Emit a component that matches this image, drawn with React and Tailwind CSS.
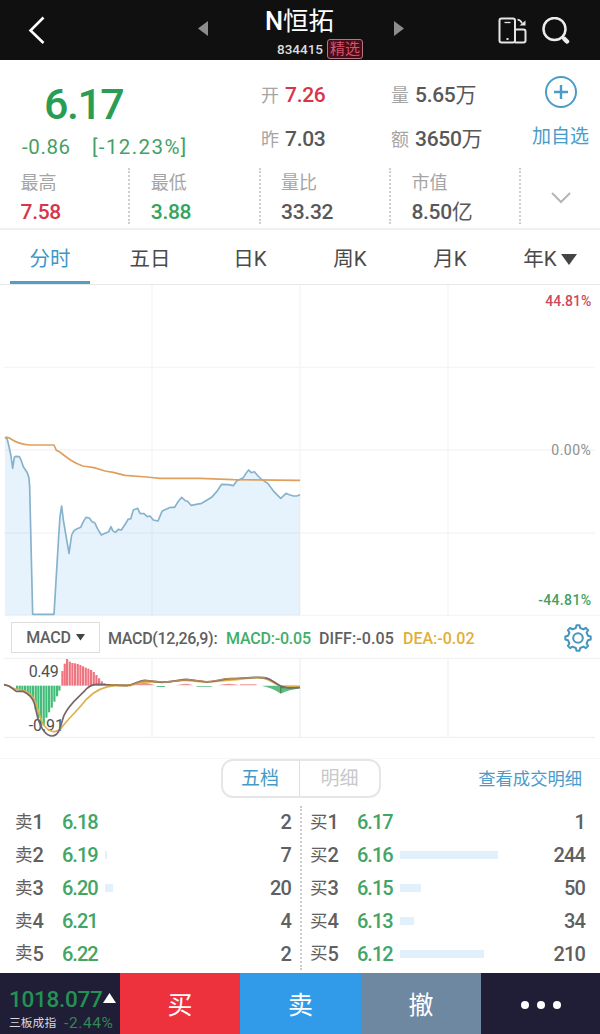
import React, { useState } from 'react';
import clsx from 'clsx';

const stats = [
  { label: '最高', value: '7.58', color: 'text-[#d8344c]' },
  { label: '最低', value: '3.88', color: 'text-[#35a45b]' },
  { label: '量比', value: '33.32', color: 'text-[#585858]' },
  { label: '市值', value: '8.50', unit: '亿', color: 'text-[#585858]' },
];

const periods = ['分时', '五日', '日K', '周K', '月K', '年K'];

const sells = [
  { side: '卖', level: 1, price: '6.18', volume: 2, bar: 0 },
  { side: '卖', level: 2, price: '6.19', volume: 7, bar: 2 },
  { side: '卖', level: 3, price: '6.20', volume: 20, bar: 8 },
  { side: '卖', level: 4, price: '6.21', volume: 4, bar: 0 },
  { side: '卖', level: 5, price: '6.22', volume: 2, bar: 0 },
];

const buys = [
  { side: '买', level: 1, price: '6.17', volume: 1, bar: 0 },
  { side: '买', level: 2, price: '6.16', volume: 244, bar: 98 },
  { side: '买', level: 3, price: '6.15', volume: 50, bar: 21 },
  { side: '买', level: 4, price: '6.13', volume: 34, bar: 14 },
  { side: '买', level: 5, price: '6.12', volume: 210, bar: 84 },
];

const pricePoints =
  '15,55 20,52 26,75 33,108 38,145 43,112 48,109 58,110 64,122 70,140 82,158 87,175 89,200 98,583 162,583 176,350 180,290 185,258 190,300 207,400 215,345 221,333 228,328 242,322 250,305 258,292 268,294 276,305 284,308 292,325 304,345 312,341 326,335 333,320 338,332 346,337 355,328 364,330 376,312 385,297 392,297 400,270 413,265 420,280 432,281 442,290 450,288 460,300 474,303 486,274 498,268 512,262 524,262 534,245 545,232 557,243 562,243 573,256 605,250 620,241 635,232 650,215 665,193 685,194 700,197 710,183 730,173 738,160 746,150 754,158 763,155 774,168 785,178 803,190 822,215 842,235 848,230 858,220 868,224 880,228 890,228 900,224';

// MACD 柱: [x, 高度]
const greenBars = [
  [48, 10], [56, 14], [64, 15], [72, 18], [80, 24], [88, 30], [96, 42], [104, 72],
  [112, 98], [120, 122], [128, 120], [136, 96], [144, 80], [152, 66], [160, 48], [168, 32], [175, 15],
];
const redBars = [
  [184, 44], [191, 66], [198, 80], [206, 72], [214, 68], [222, 67], [230, 65], [238, 62], [246, 58],
  [254, 54], [262, 51], [270, 47], [278, 41], [286, 32], [294, 22], [302, 13], [310, 7],
];

const Header = () => (
  <header className="h-[60px] bg-[#101010] flex items-center text-white">
    <div className="w-[190px] pl-7">
      <svg width="18" height="28" viewBox="0 0 18 28" fill="none" stroke="#fff" strokeWidth="2.6">
        <path d="M15.5 1.5 2.5 14.5 15.5 27" />
      </svg>
    </div>
    <div className="w-[222px] flex items-center justify-between px-2">
      <svg width="10" height="15" viewBox="0 0 10 15" className="mt-[-3px]">
        <path d="M10 0v15L0 7.5z" fill="#8d8d8d" />
      </svg>
      <div className="w-[110px] pt-[5px]">
        <h1 className="pl-[19px] text-[25.500px] leading-[29px] whitespace-nowrap">
          <span className="font-medium">N</span>恒拓
        </h1>
        <div className="flex items-center gap-[4px] pl-[31px] mt-[3px]">
          <span className="text-[13.5px] leading-5 font-medium text-[#dedede]">834415</span>
          <span className="w-[36px] h-5 shrink-0 rounded-[3px] border border-[#b17680] bg-[#4a0c18] text-[#d65368] text-[15px] leading-[18px] text-center whitespace-nowrap">
            精选
          </span>
        </div>
      </div>
      <svg width="10" height="15" viewBox="0 0 10 15" className="mt-[-3px]">
        <path d="M0 0v15l10-7.500z" fill="#8d8d8d" />
      </svg>
    </div>
    <div className="flex-1 flex items-center justify-end pr-[30px] pt-[1px] gap-[14px]">
      <svg width="30" height="28" viewBox="0 0 30 28" fill="none" stroke="#e6e6e6" strokeWidth="2">
        <rect x="1.500" y="1.500" width="15.500" height="24" rx="2" />
        <path d="M6.500 5.500h6" strokeWidth="1.300" />
        <path d="M8.500 22h2" />
        <path d="M17 12.500h8.500a2 2 0 0 1 2 2v9a2 2 0 0 1-2 2H17" />
        <path d="M19.500 2.500c2.500.5 4 2 4.500 4" strokeWidth="1.500" />
        <path d="M27.500 3.500V8.500H21.500z" fill="#e6e6e6" stroke="none" />
      </svg>
      <svg width="28" height="28" viewBox="0 0 28 28" fill="none" stroke="#ededed">
        <circle cx="12.500" cy="12" r="11" strokeWidth="2.500" />
        <path d="m20.500 20 1.500 1.500" strokeWidth="2.500" />
        <path d="m22.500 22 2.500 2.500" strokeWidth="4.500" strokeLinecap="round" />
      </svg>
    </div>
  </header>
);

const Pair = ({ label, value, unit, color = 'text-[#585858]' }) => (
  <div className="flex items-center h-[43.500px] whitespace-nowrap">
    <span className="w-6 text-[18px] text-[#a5a5a5]">{label}</span>
    <span className={clsx('text-[21px] tracking-[-0.3px]', color)}>
      <span className="font-medium">{value}</span>
      {unit}
    </span>
  </div>
);

const Quote = () => (
  <section className="h-[170px] border-b-2 border-[#f0f0f0]">
    <div className="h-[105px] flex">
      <div className="w-[261px] pl-[22px] pt-[20px] text-[#2a9d54]">
        <div className="pl-[22px] text-[43px] leading-[49px] font-medium tracking-[-1.5px]">6.17</div>
        <div className="flex pt-[1px] text-[20.500px] leading-[34px] tracking-[0.6px] text-[#459f68]">
          <span className="w-[70px]">-0.86</span>
          <span className="tracking-[1.4px]">[-12.23%]</span>
        </div>
      </div>
      <div className="w-[130px] pt-[14px]">
        <Pair label="开" value="7.26" color="text-[#d8344c]" />
        <Pair label="昨" value="7.03" />
      </div>
      <div className="w-[130px] pt-[14px]">
        <Pair label="量" value="5.65" unit="万" />
        <Pair label="额" value="3650" unit="万" />
      </div>
      <div className="flex-1 flex flex-col items-center pt-[15px] text-[#4a9cc8]">
        <svg width="34" height="34" viewBox="0 0 34 34" fill="none" stroke="currentColor">
          <circle cx="17" cy="17" r="15" strokeWidth="2" />
          <path d="M17 10v14M10 17h14" strokeWidth="2.400" />
        </svg>
        <span className="mt-[15px] text-[19px] leading-[26px]">加自选</span>
      </div>
    </div>
    <div className="flex">
      {stats.map((item) => (
        <div key={item.label} className="w-[130.300px] h-[60px] flex">
          <div className="flex-1 pl-[20.500px] whitespace-nowrap">
            <div className="mt-[5px] text-[18px] leading-[26px] text-[#a5a5a5]">{item.label}</div>
            <div className={clsx('text-[21px] leading-[33px] tracking-[-0.3px]', item.color)}>
              <span className="font-medium">{item.value}</span>
              {item.unit}
            </div>
          </div>
          <div className="h-[56px] mt-[3px] border-r-2 border-dotted border-[#cfcfcf]" />
        </div>
      ))}
      <div className="flex-1 flex items-center justify-center pt-[5px]">
        <svg width="20" height="12" viewBox="0 0 20 12" fill="none" stroke="#b5b5b5" strokeWidth="2">
          <path d="m1 1 9 9 9-9" />
        </svg>
      </div>
    </div>
  </section>
);

const Tabs = ({ active, onChange }) => (
  <nav className="h-[55px] flex border-b border-[#e8e8e8] text-[20.5px]">
    {periods.map((name) => (
      <button
        key={name}
        onClick={() => onChange(name)}
        className={clsx(
          'w-[100px] flex justify-center',
          active === name ? 'text-[#3d97c6]' : 'text-[#4a4a4a]'
        )}
      >
        <span
          className={clsx(
            'h-[54px] w-20 pt-[8px] flex items-center justify-center gap-1 border-b-[3px] whitespace-nowrap',
            active === name ? 'border-[#559dc4]' : 'border-transparent'
          )}
        >
          {name}
          {name === '年K' && (
            <svg width="16" height="12" viewBox="0 0 16 12">
              <path d="M0 0h16L8 11z" fill="#444" />
            </svg>
          )}
        </span>
      </button>
    ))}
  </nav>
);

const PriceChart = () => (
  <svg className="block w-[600px] h-[331px]" viewBox="0 0 1800 993" fill="none">
    <polygon transform="translate(0 405)" points={`${pricePoints} 900,586 15,586`} fill="#e6f3fc" />
    <path
      d="M12 247H1785M12 495H1785M12 744H1785M12 991H1800M456 0V993M900 0V993M1344 0V993"
      stroke="#7c7c8c"
      strokeOpacity="0.08"
      strokeWidth="4"
    />
    <g transform="translate(0 405)" strokeWidth="5" strokeLinejoin="round">
      <polyline points={pricePoints} stroke="#86b2cc" />
      <path
        d="M15 54Q20 50 28 54C45 66 65 74 90 75H162L169 91 178 95C205 116 218 127 248 138L282 143 315 153 340 157 375 166 440 171 480 175H600L700 179 900 181"
        stroke="#dfa05f"
      />
    </g>
    <g fontSize="42" textAnchor="end">
      <text x="1774" y="63" fill="#d0485a" fontWeight="500">44.81%</text>
      <text x="1774" y="511" fill="#8e8e8e" letterSpacing="1.5">0.00%</text>
      <text x="1774" y="961" fill="#43a061" fontWeight="500" letterSpacing="1">-44.81%</text>
    </g>
  </svg>
);

const MacdBar = () => (
  <div className="h-[41px] flex items-center pl-[11px] text-[16px] font-medium text-[#606060] whitespace-nowrap">
    <button className="w-[89px] h-[31px] mt-[2px] shrink-0 border border-[#ddd] flex items-center justify-center gap-[5px] tracking-[-0.2px]">
      MACD
      <svg width="9" height="7" viewBox="0 0 9 7">
        <path d="M0 0h9L4.500 6.500z" fill="#444" />
      </svg>
    </button>
    <span className="ml-2 mt-[4px] w-[118px] tracking-[-0.3px]">MACD(12,26,9):</span>
    <span className="mt-[4px] w-[93px] tracking-[-0.2px] text-[#3fae68]">MACD:-0.05</span>
    <span className="mt-[4px] w-[84px] tracking-[0.1px]">DIFF:-0.05</span>
    <span className="mt-[4px] text-[#e3ae35]">DEA:-0.02</span>
    <svg className="ml-auto mr-2 mt-[2px]" width="28" height="28" viewBox="0 0 28 28" fill="none" stroke="#4596bd" strokeWidth="2" strokeLinejoin="round">
      <path d="M11.800 4 12.500 1.300h3L16.200 4l3.300 1.400 2.400-1.500 2.200 2.200-1.500 2.400L24 11.800l2.700.7v3l-2.700.7-1.400 3.300 1.500 2.400-2.200 2.200-2.400-1.500-3.300 1.400-.7 2.700h-3l-.7-2.700-3.300-1.400-2.400 1.500-2.200-2.200 1.500-2.400L4 16.200l-2.700-.7v-3l2.700-.7 1.400-3.300-1.500-2.400 2.200-2.200 2.400 1.500z" />
      <circle cx="14" cy="14" r="4.800" />
    </svg>
  </div>
);

const MacdChart = () => (
  <svg className="block w-[600px] h-[82px]" viewBox="0 126 1800 246" fill="none">
    <path
      d="M12 130H1800M12 367H1785M456 130V367M900 130V367M1344 130V367"
      stroke="#f1f1f3"
      strokeWidth="4"
    />
    {greenBars.map(([x, h]) => (
      <rect key={x} x={x} y="212" width="6.500" height={h} fill="#42bd79" />
    ))}
    {redBars.map(([x, h]) => (
      <rect key={x} x={x} y={212 - h} width="6.500" height={h} fill="#ef7480" />
    ))}
    <path d="M400 211Q432 196 465 211zM530 211Q560 201 580 211zM655 211Q685 201 720 211zM720 208H770V211H720z" fill="#ee9290" />
    <path d="M785 212Q820 219 842 236 865 224 895 221V212zM470 213h25v3h-25zM590 213h45v2h-45z" fill="#5dbb86" />
    <g fontSize="48" fill="#505050">
      <text x="86" y="186" textLength="90">0.49</text>
      <text x="86" y="349" textLength="106">-0.91</text>
    </g>
    <g strokeWidth="5" strokeLinejoin="round">
      <path
        d="M12 209C30 212 42 226 55 223 85 228 98 239 108 266L125 318C140 351 165 358 183 340 205 310 235 285 259 253 285 226 310 214 345 212H390C415 204 430 199 455 201H505C545 193 570 196 610 201 650 202 665 195 710 194 755 189 780 184 804 194L842 214H900"
        stroke="#dcb14d"
      />
      <path
        d="M12 209 27 213 49 229 68 229C88 238 96 246 103 265L113 308C125 346 138 362 156 363 180 363 182 327 192 301 210 263 240 245 261 220Q274 208 292 208L380 212C410 206 420 195 435 196L485 202C530 200 540 193 560 193L620 201C650 200 665 192 690 191 730 191 750 185 792 188 812 190 820 202 842 213L865 219 900 218"
        stroke="#75656b"
      />
      <path d="M330 210 390 210C415 204 420 197 440 197L490 201C530 200 545 194 565 194L620 200C650 198 665 191 690 191 740 190 765 184 795 188" stroke="#b68b52" strokeWidth="4" />
      <path d="M842 213V234M842 218H900" stroke="#4f8b45" strokeWidth="4" />
    </g>
  </svg>
);

const BookSide = ({ rows, className }) => (
  <div className={className}>
    {rows.map((row) => (
      <div key={row.level} className="h-[32.800px] flex items-center text-[20px] text-[#606060]">
        <span className="w-[47px] flex items-center">
          <span className="text-[17.500px]">{row.side}</span>
          <span className="font-medium tracking-[-0.5px]">{row.level}</span>
        </span>
        <span className="w-[43px] font-medium text-[#42a566] tracking-[-1px]">{row.price}</span>
        <span className="h-2 bg-[#e1f0fa]" style={{ width: row.bar }} />
        <span className="ml-auto font-medium tracking-[-0.9px]">{row.volume}</span>
      </div>
    ))}
  </div>
);

const OrderBook = () => (
  <section className="h-[234px] pt-[19px]">
    <div className="h-[39px] flex items-center pl-[221px] pr-[18px] border-t border-[#f7f7f7]">
      <div className="w-[160px] h-[39px] flex rounded-xl border-2 border-[#e6e6e6] text-[19px]">
        <button className="w-[77px] pt-[3px] pr-[2px] border-r border-[#dedede] text-[#459bc8]">五档</button>
        <button className="flex-1 pt-[3px] text-[#c8c8c8]">明细</button>
      </div>
      <a className="ml-auto pt-[3px] text-[17.3px] text-[#489ccd]">查看成交明细</a>
    </div>
    <div className="flex pt-[9px]">
      <BookSide rows={sells} className="w-[300px] pl-[15px] pr-[9px]" />
      <BookSide rows={buys} className="w-[300px] pl-[8px] pr-[15px] border-l-2 border-dotted border-[#cbcbcb]" />
    </div>
  </section>
);

const Footer = () => (
  <footer className="h-[61px] flex text-white text-[25px]">
    <div className="w-[120px] bg-[#201d36] pl-[9px] pt-[13px] whitespace-nowrap">
      <div className="flex items-center gap-[1px] text-[#239252]">
        <span className="w-[93px] text-[22.5px] leading-[27px] font-medium tracking-[-0.3px]">1018.077</span>
        <svg width="13" height="10" viewBox="0 0 13 10" className="mt-[-3px]">
          <path d="M6.500 0 13 10H0z" fill="#fff" />
        </svg>
      </div>
      <div className="flex items-center leading-[20px]">
        <span className="w-[55px] text-[11.8px] text-[#d8d8de]">三板成指</span>
        <span className="text-[15.500px] tracking-[0.6px] text-[#2f8757]">-2.44%</span>
      </div>
    </div>
    <button className="w-[120px] pt-[5px] bg-[#ed323e]">买</button>
    <button className="w-[121px] pt-[5px] bg-[#319bea]">卖</button>
    <button className="w-[120px] pt-[5px] bg-[#6f88a2]">撤</button>
    <button className="flex-1 pt-[2px] bg-[#201d36] flex items-center justify-center gap-2">
      <i className="w-2 h-2 rounded-full bg-white" />
      <i className="w-2 h-2 rounded-full bg-white" />
      <i className="w-2 h-2 rounded-full bg-white" />
    </button>
  </footer>
);

const App = () => {
  const [period, setPeriod] = useState('分时');

  return (
    <div className="w-[600px] h-[1034px] overflow-hidden bg-white font-[Roboto,'Noto_Sans_CJK_SC',sans-serif]">
      <Header />
      <Quote />
      <Tabs active={period} onChange={setPeriod} />
      <PriceChart />
      <MacdBar />
      <MacdChart />
      <OrderBook />
      <Footer />
    </div>
  );
};

export default App;
